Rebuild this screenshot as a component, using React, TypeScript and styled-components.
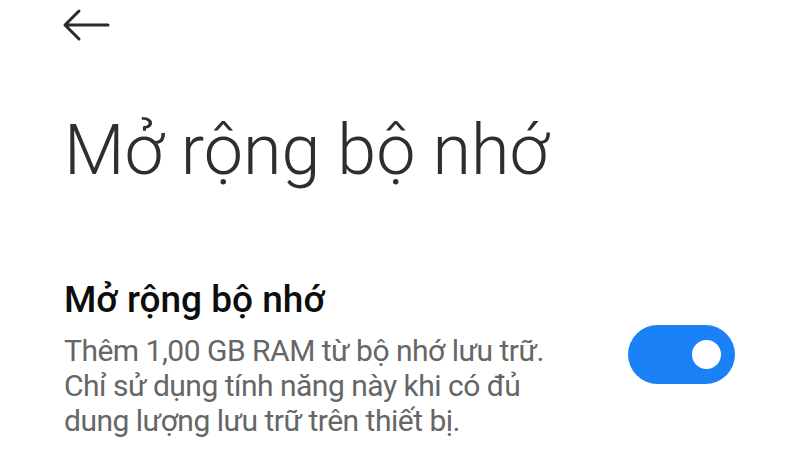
import React from "react";
import styled, { createGlobalStyle } from "styled-components";

const Global = createGlobalStyle`
  html, body { margin: 0; padding: 0; background: #ffffff; }
  body { font-family: Roboto, "Noto Sans", sans-serif; overflow: hidden; }
`;

const Page = styled.div`
  width: 800px;
  height: 450px;
  box-sizing: border-box;
  padding: 0 64px 0 64px;
  display: flex;
  flex-direction: column;
  background: #fff;
`;

const BackButton = styled.button`
  width: 48px;
  height: 34px;
  margin-top: 8px;
  margin-left: -2px;
  padding: 0;
  border: 0;
  background: transparent;
  display: flex;
  align-items: center;
`;

const Title = styled.h1`
  margin: 67px 0 0 0;
  font-family: Roboto, sans-serif;
  font-weight: 300;
  font-size: 70px;
  line-height: 82px;
  color: #2e2e2e;
`;

const Row = styled.div`
  margin-top: 88px;
  display: flex;
  align-items: flex-start;
  justify-content: space-between;
`;

const TextBlock = styled.div`
  display: flex;
  flex-direction: column;
`;

const ItemTitle = styled.div`
  font-family: Roboto, sans-serif;
  font-weight: 500;
  font-size: 37px;
  line-height: 42px;
  color: #0d0d0d;
`;

const ItemDesc = styled.div`
  margin-top: 12px;
  font-family: Roboto, sans-serif;
  font-weight: 400;
  font-size: 30px;
  line-height: 35px;
  letter-spacing: -0.5px;
  color: #666666;
`;

const Track = styled.div<{ $on: boolean }>`
  width: 107px;
  height: 59px;
  border-radius: 30px;
  background: ${(p) => (p.$on ? "#1a82f6" : "#cccccc")};
  display: flex;
  align-items: center;
  justify-content: ${(p) => (p.$on ? "flex-end" : "flex-start")};
  padding: 0 14px;
  box-sizing: border-box;
  margin-right: 1px;
  margin-top: 46px;
`;

const Knob = styled.div`
  width: 29px;
  height: 29px;
  border-radius: 50%;
  background: #ffffff;
`;

export default function App() {
  return (
    <>
      <Global />
      <Page>
        <BackButton aria-label="back">
          <svg width="48" height="34" viewBox="0 0 48 34" fill="none">
            <path
              d="M46 17 H3 M17 3 L3 17 L17 31"
              stroke="#2b2b2b"
              strokeWidth="3"
              strokeLinecap="round"
              strokeLinejoin="round"
            />
          </svg>
        </BackButton>
        <Title>Mở rộng bộ nhớ</Title>
        <Row>
          <TextBlock>
            <ItemTitle>Mở rộng bộ nhớ</ItemTitle>
            <ItemDesc>
              Thêm 1,00 GB RAM từ bộ nhớ lưu trữ.
              <br />
              Chỉ sử dụng tính năng này khi có đủ
              <br />
              dung lượng lưu trữ trên thiết bị.
            </ItemDesc>
          </TextBlock>
          <Track $on={true}>
            <Knob />
          </Track>
        </Row>
      </Page>
    </>
  );
}
